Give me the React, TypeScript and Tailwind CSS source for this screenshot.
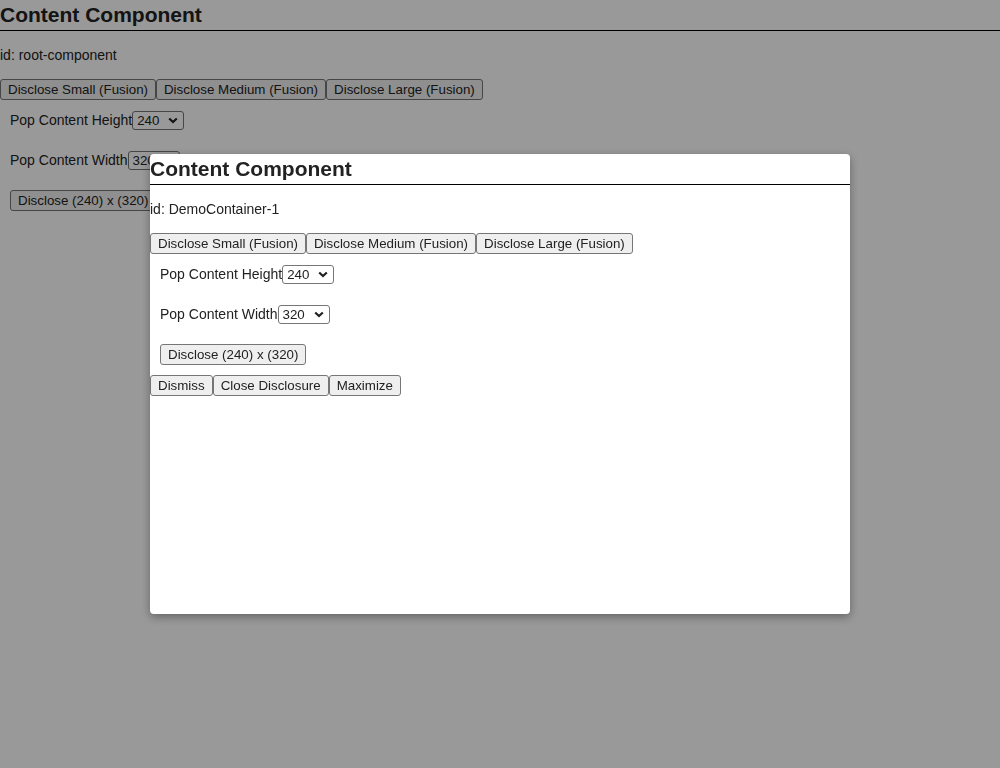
import { useState } from 'react';

const btn =
  'border border-[#767676] rounded-[3px] bg-[#efefef] px-[7px] py-[2px] text-[13.33px] leading-[15px] text-[#222] whitespace-nowrap';

function SizeSelect({ value, onChange }: { value: string; onChange: (v: string) => void }) {
  return (
    <span className="relative inline-flex">
      <select
        value={value}
        onChange={(e) => onChange(e.target.value)}
        className="appearance-none w-[52px] h-[19px] border border-[#767676] rounded-[3px] bg-white text-[13.33px] leading-[15px] text-[#222] pl-[4px]"
      >
        {['120', '160', '240', '320', '480'].map((o) => (
          <option key={o} value={o}>
            {o}
          </option>
        ))}
      </select>
      {/* chevron */}
      <svg
        className="pointer-events-none absolute right-[6px] top-[6px]"
        width="10"
        height="7"
        viewBox="0 0 10 7"
        fill="none"
      >
        <path d="M1.2 1.5l3.8 3.6 3.8-3.6" stroke="#222" strokeWidth="2.2" />
      </svg>
    </span>
  );
}

function ContentComponent({ id, footer }: { id: string; footer?: boolean }) {
  const [height, setHeight] = useState('240');
  const [width, setWidth] = useState('320');

  return (
    <div className="text-[14px] text-[#222]">
      <h2 className="text-[21px] font-bold leading-[30px] border-b border-black">Content Component</h2>
      <p className="mt-4 mb-4 leading-[16px]">id: {id}</p>

      {/* fusion buttons */}
      <div className="flex">
        <button className={btn}>Disclose Small (Fusion)</button>
        <button className={btn}>Disclose Medium (Fusion)</button>
        <button className={btn}>Disclose Large (Fusion)</button>
      </div>

      <div className="pl-[10px]">
        <div className="h-[40px] flex items-center">
          <span>Pop Content Height</span>
          <SizeSelect value={height} onChange={setHeight} />
        </div>
        <div className="h-[40px] flex items-center">
          <span>Pop Content Width</span>
          <SizeSelect value={width} onChange={setWidth} />
        </div>
        <div className="h-[40px] flex items-center">
          <button className={btn}>
            Disclose ({height}) x ({width})
          </button>
        </div>
      </div>

      {footer && (
        <div className="flex mt-[1px]">
          <button className={btn}>Dismiss</button>
          <button className={btn}>Close Disclosure</button>
          <button className={btn}>Maximize</button>
        </div>
      )}
    </div>
  );
}

export default function App() {
  return (
    <div className="relative min-h-screen bg-white font-['Liberation_Sans',Arial,sans-serif]">
      <ContentComponent id="root-component" />

      {/* overlay */}
      <div className="fixed inset-0 bg-black/40" />

      {/* disclosure popup */}
      <div className="fixed left-[150px] top-[154px] w-[700px] h-[460px] bg-white rounded-[4px] shadow-[0_3px_10px_rgba(0,0,0,0.35)] overflow-hidden">
        <ContentComponent id="DemoContainer-1" footer />
      </div>
    </div>
  );
}
